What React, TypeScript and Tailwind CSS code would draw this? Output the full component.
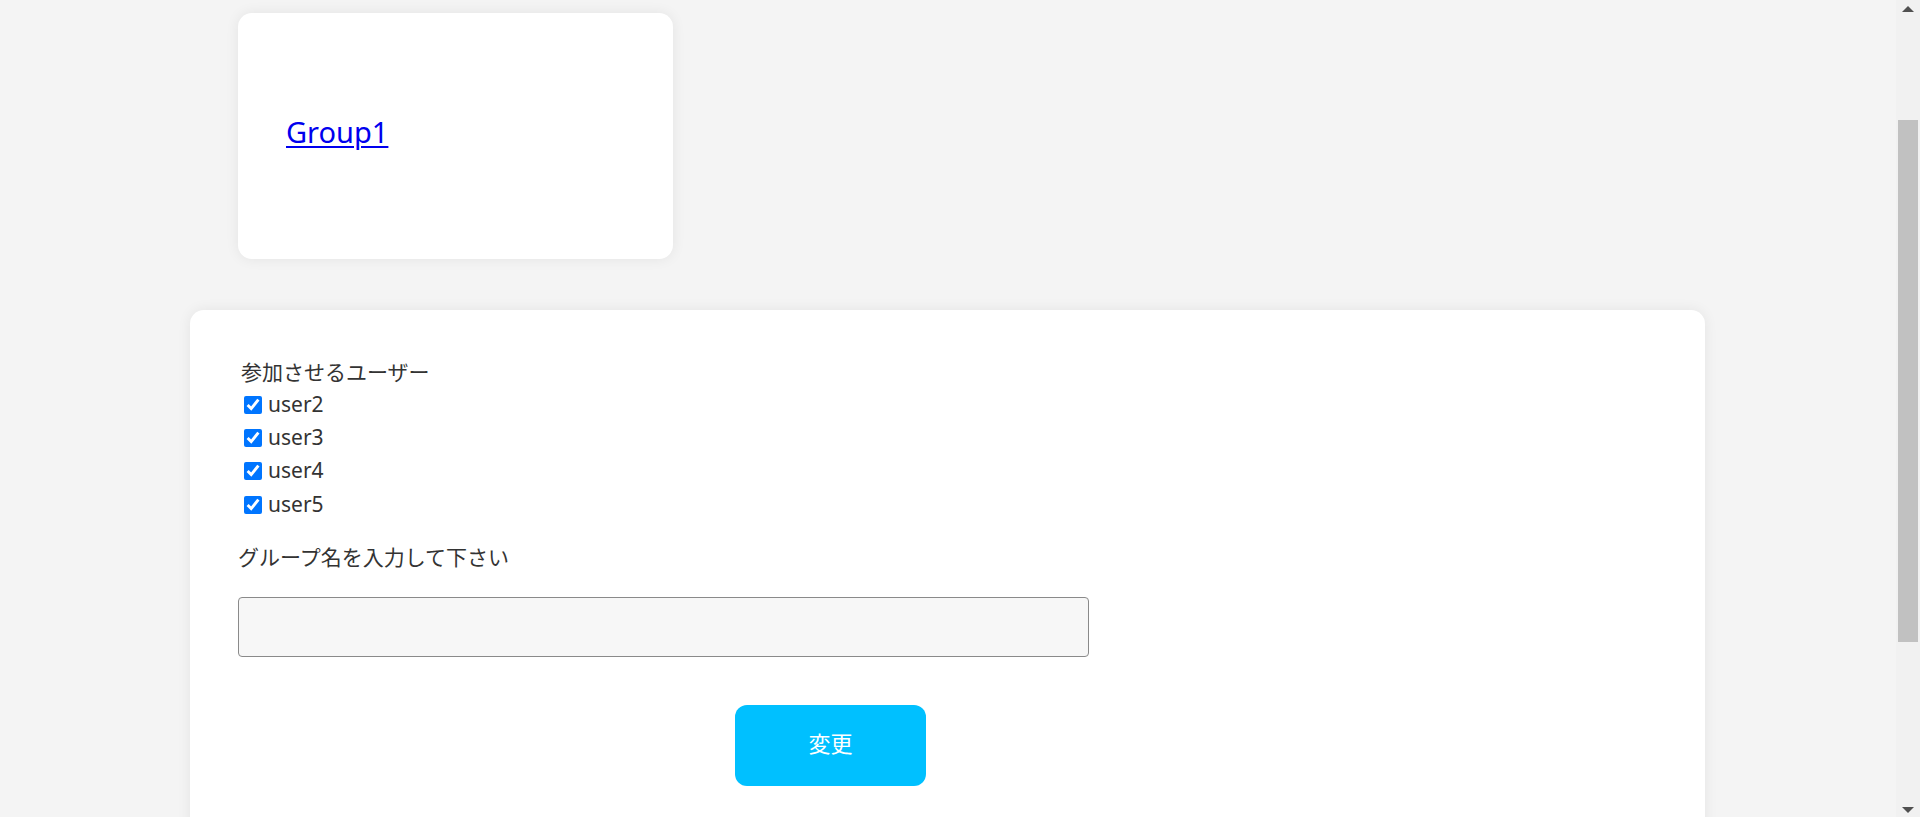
import React from "react";

const users = ["user2", "user3", "user4", "user5"];

export default function App() {
  return (
    <div
      className="flex h-[817px] w-[1920px] overflow-hidden bg-[#f4f4f4] text-[#333333]"
      style={{ fontFamily: '"Noto Sans", "Noto Sans CJK JP", sans-serif' }}
    >
      <div className="flex min-h-0 flex-1 flex-col overflow-hidden">
        <div className="ml-[238px] mt-[13px] flex h-[246px] w-[435px] shrink-0 items-center rounded-[14px] bg-white pb-[9px] pl-[48px] shadow-[0_0_14px_rgba(0,0,0,0.07)]">
          <a href="#" className="text-[29px] leading-none text-[#0000ee] underline underline-offset-[3px] decoration-[2px]">
            Group1
          </a>
        </div>

        <div className="ml-[190px] mt-[51px] h-[700px] w-[1515px] shrink-0 rounded-[14px] bg-white pl-[48px] pt-[47px] shadow-[0_0_14px_rgba(0,0,0,0.07)]">
          <div className="ml-[3px] flex h-[31px] items-center text-[21px]">参加させるユーザー</div>
          {users.map((u) => (
            <label key={u} className="flex h-[33.3px] items-center text-[21px]">
              <input
                type="checkbox"
                defaultChecked
                className="ml-[6px] mr-[6px] h-[18px] w-[18px] accent-[#0075ff]"
              />
              <span>{u}</span>
            </label>
          ))}
          <div className="mt-[20px] flex h-[33px] items-center text-[21px]">グループ名を入力して下さい</div>
          <input
            type="text"
            className="mt-[23px] block h-[60px] w-[851px] rounded-[4px] border border-[#8a8a8a] bg-[#f7f7f7] px-3 text-[21px] outline-none"
          />
          <button className="ml-[497px] mt-[48px] flex h-[81px] w-[191px] items-center justify-center rounded-[12px] bg-[#00c0ff] pb-[5px] text-[22px] text-white">
            変更
          </button>
        </div>
      </div>

      <div className="relative h-full w-[24px] shrink-0 bg-[#f1f1f1]">
        <div className="absolute left-1/2 top-[6px] h-0 w-0 -translate-x-1/2 border-x-[6px] border-b-[6px] border-x-transparent border-b-[#505050]" />
        <div className="absolute left-[2px] right-[2px] top-[120px] h-[522px] bg-[#c1c1c1]" />
        <div className="absolute bottom-[4px] left-1/2 h-0 w-0 -translate-x-1/2 border-x-[6px] border-t-[6px] border-x-transparent border-t-[#505050]" />
      </div>
    </div>
  );
}
